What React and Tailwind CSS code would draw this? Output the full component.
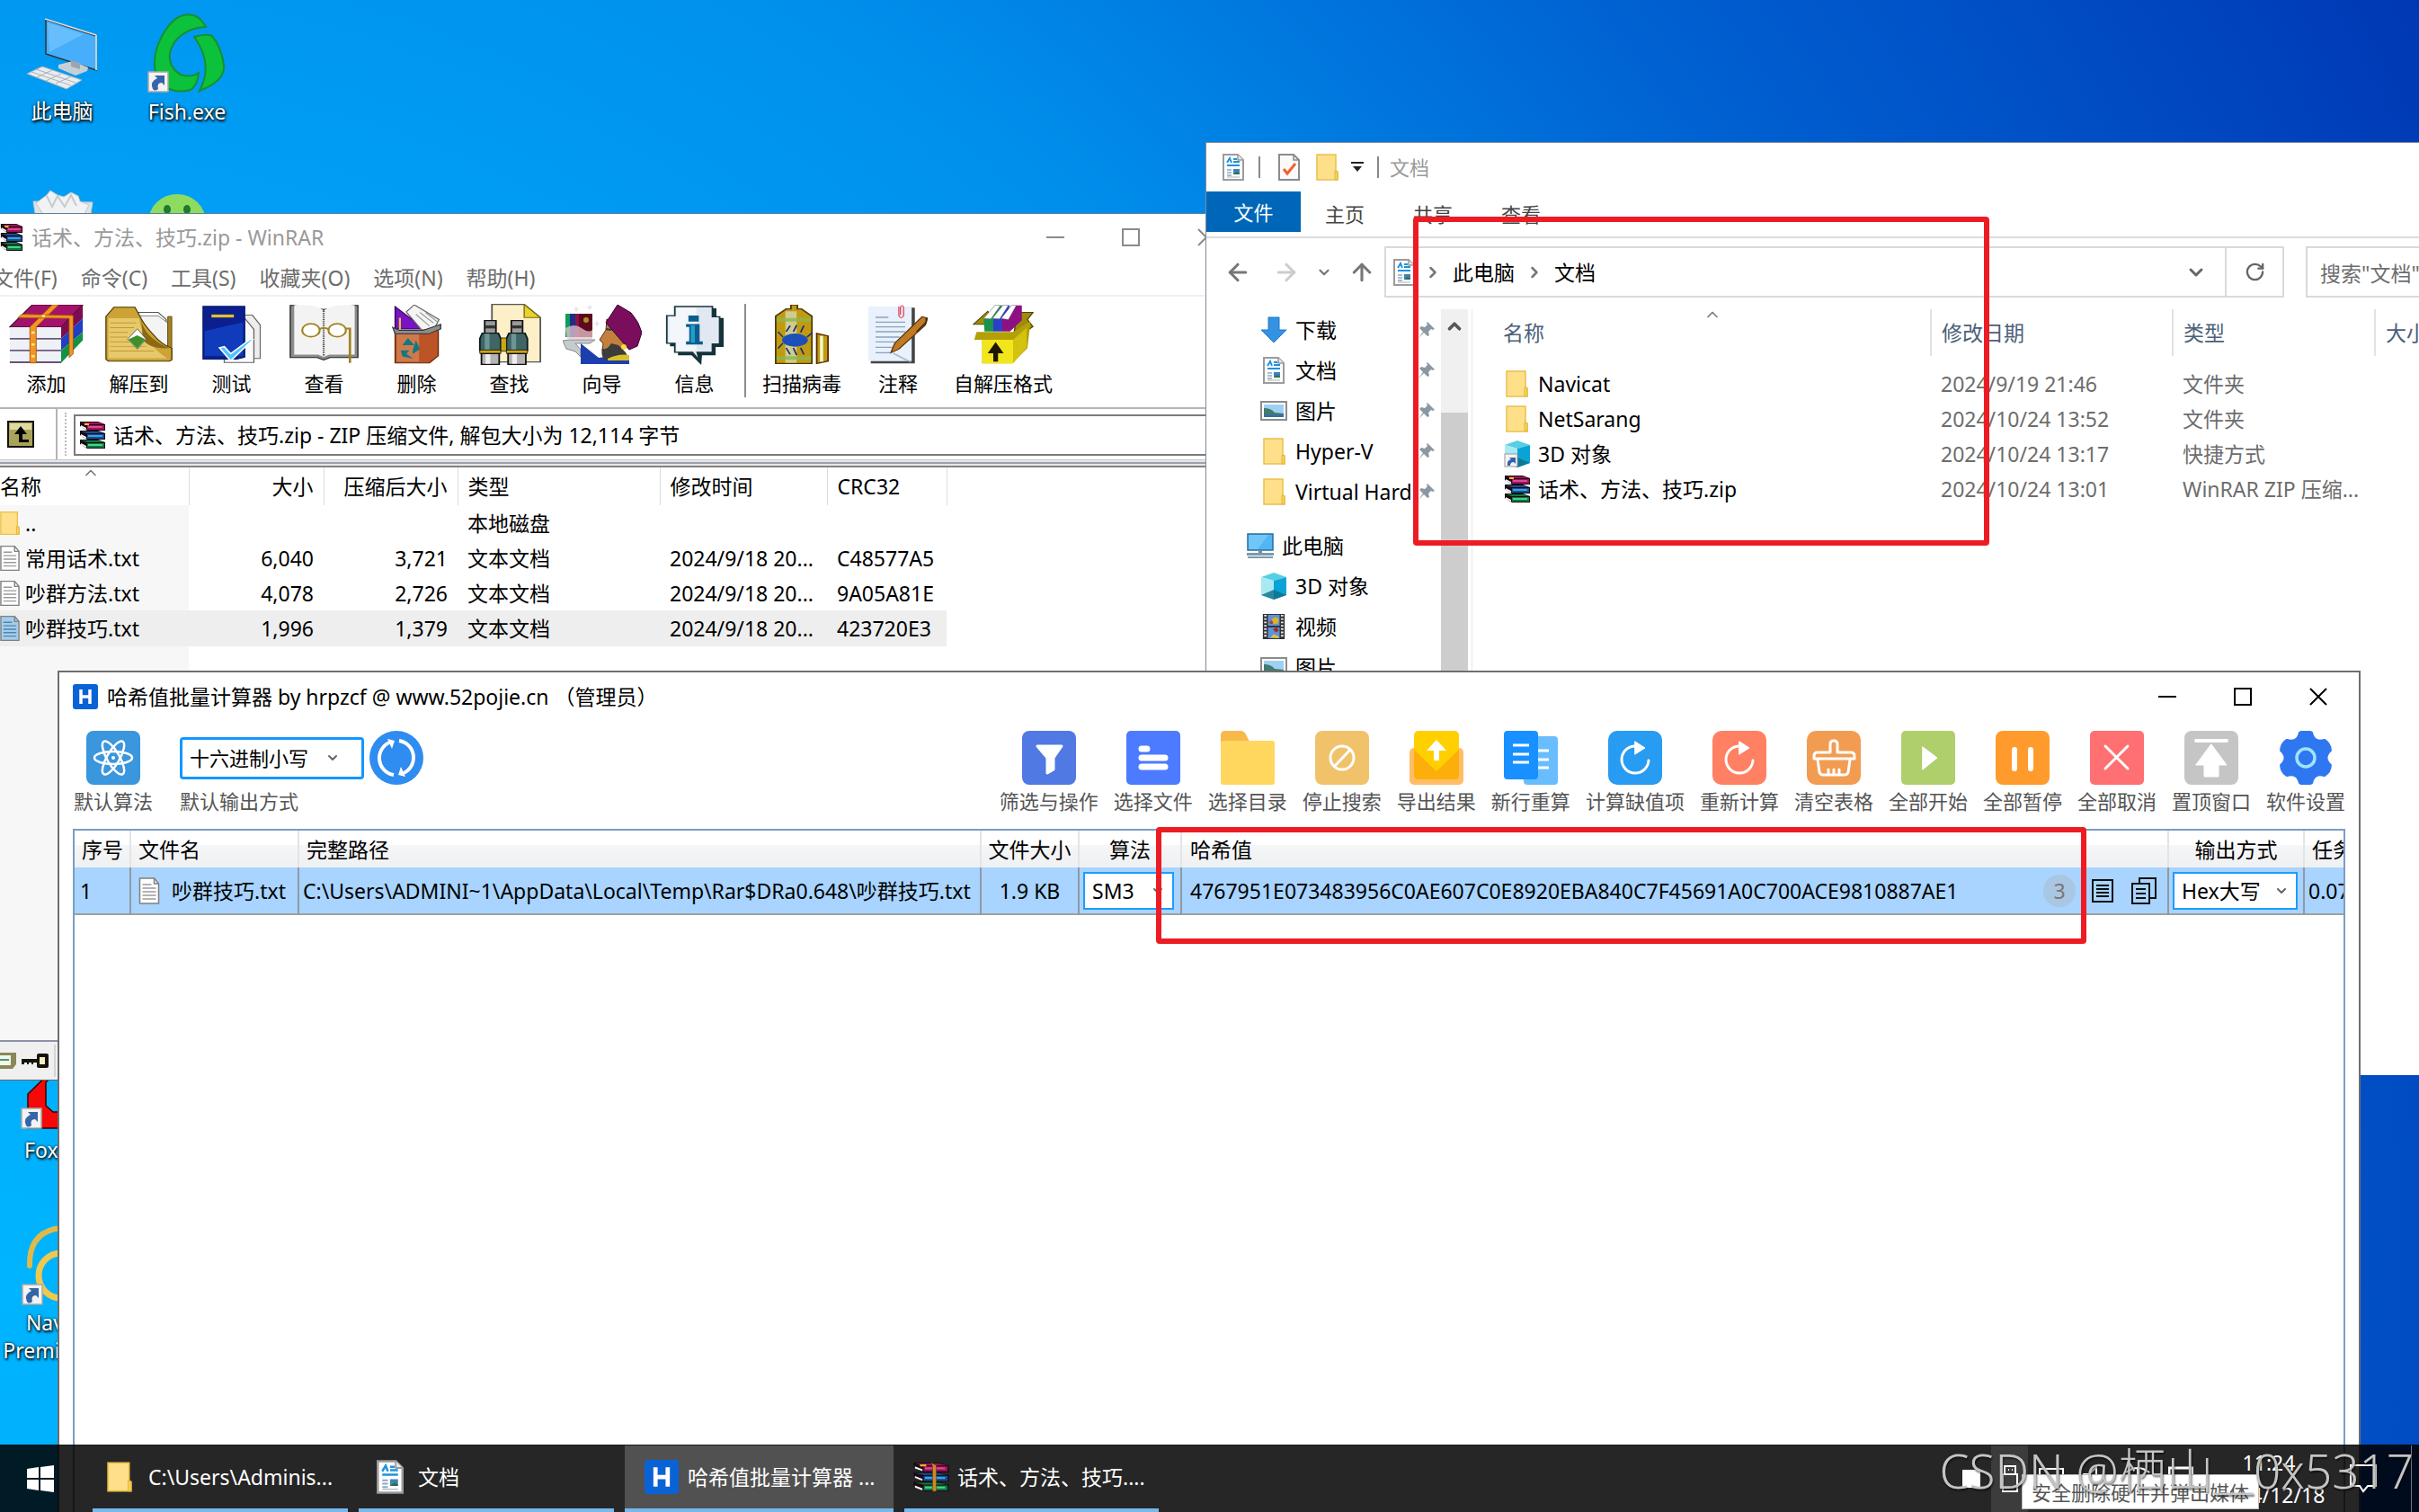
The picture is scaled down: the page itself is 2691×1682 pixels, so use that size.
import React from 'react';
import { ArrowLeft, ArrowRight, ArrowUp, ChevronDown, ChevronRight, ChevronUp, RotateCw } from 'lucide-react';

/* ---------- small shared icons ---------- */

const Folder = ({ className }) => (
  <svg viewBox="0 0 25 30" className={className}>
    <path d="M1 1h21v19h2v9H1z" fill="#ffe08a" stroke="#e9c04a" strokeWidth="1.5" />
    <path d="M21 19q3-1 3 2v8h-3z" fill="#fbd25c" stroke="#e0b43c" />
  </svg>
);

const DocPage = ({ className }) => (
  <svg viewBox="0 0 24 30" className={className}>
    <path d="M1 1h16l6 6v22H1z" fill="#fff" stroke="#9b9b9b" strokeWidth="2" />
    <path d="M17 1v6h6" fill="#e8e8e8" stroke="#9b9b9b" strokeWidth="1.5" />
    <path d="M5 10l3-5 2 5M12 6h4M12 9h7M5 13h14" stroke="#1f93dd" strokeWidth="2" fill="none" />
    <path d="M5 18h5M5 21h5M5 24h5" stroke="#8aa9c2" strokeWidth="1.5" />
    <rect x="12" y="17" width="7" height="6" fill="#3d83b8" />
    <path d="M12 23l4-3 3 2v1z" fill="#2f6d46" />
    <path d="M5 26h14" stroke="#a8b4bd" />
  </svg>
);

const TextPage = ({ className, fill = '#fff', line = '#9a9a9a' }) => (
  <svg viewBox="0 0 23 30" className={className}>
    <path d="M1 1h16l5 6v22H1z" fill={fill} stroke="#808080" strokeWidth="1.5" />
    <path d="M17 1v6h5" fill="none" stroke="#808080" strokeWidth="1.5" />
    <path d="M4 8h10M4 12h15M4 16h15M4 20h15M4 24h15" stroke={line} strokeWidth="1.5" />
  </svg>
);

const CheckPage = ({ className }) => (
  <svg viewBox="0 0 24 30" className={className}>
    <path d="M1 1h16l6 6v22H1z" fill="#fafafa" stroke="#8b8b8b" strokeWidth="2" />
    <path d="M17 1v6h6" fill="none" stroke="#8b8b8b" strokeWidth="1.5" />
    <path d="M6 17l4 5 9-11" fill="none" stroke="#f2622b" strokeWidth="3" />
  </svg>
);

const Picture = ({ className }) => (
  <svg viewBox="0 0 30 22" className={className}>
    <rect x="1" y="1" width="28" height="20" fill="#fff" stroke="#8c8c8c" strokeWidth="2" />
    <rect x="4" y="4" width="22" height="14" fill="#9fd0f3" />
    <path d="M4 8q8 0 12 5l10 1v4H4z" fill="#3f7c6d" />
    <path d="M4 15h22v3H4z" fill="#3a6f9c" />
  </svg>
);

const Cube = ({ className, shortcut }) => (
  <svg viewBox="0 0 30 30" className={className}>
    <path d="M1 5l14-5 14 5-14 4z" fill="#56cfe4" />
    <path d="M1 5l14 4v21L1 25z" fill="#a9e9f2" />
    <path d="M29 5L15 9v21l14-5z" fill="#0aa3d6" />
    <path d="M1 25l14-6 14 6-14 5z" fill="#0c6d87" opacity=".8" />
    {shortcut && (
      <>
        <rect x="1" y="15" width="14" height="14" fill="#f4f4f4" stroke="#9a9a9a" />
        <path d="M4 28q-1-6 4-7l-2-2h7v7l-2-2q-4 0-4 4z" fill="#2f62ae" />
      </>
    )}
  </svg>
);

const Film = ({ className }) => (
  <svg viewBox="0 0 26 30" className={className}>
    <rect width="26" height="30" fill="#2f2f2f" />
    <path d="M3 1v28M23 1v28" stroke="#e8e8e8" strokeWidth="3" strokeDasharray="2 2" />
    <rect x="6" y="1" width="14" height="13" fill="#5f93d6" />
    <rect x="6" y="16" width="14" height="13" fill="#5f93d6" />
    <circle cx="15" cy="8" r="4" fill="#d8b32f" />
    <circle cx="10" cy="10" r="2" fill="#b43a2c" />
    <path d="M12 18l5-2 2 4-4 2z" fill="#a32a23" />
    <path d="M9 28l4-4 6 3v2z" fill="#e0c13c" />
  </svg>
);

const Monitor = ({ className }) => (
  <svg viewBox="0 0 30 30" className={className}>
    <rect x="1" y="2" width="28" height="18" fill="#52b6f4" stroke="#2a6e9e" strokeWidth="1.5" />
    <path d="M2 3h22L12 19H2z" fill="#7fcdfa" opacity=".7" />
    <path d="M13 20h4v3h-4z" fill="#7b8a96" />
    <path d="M0 24h30v1H0zM1 28h28" stroke="#7d99ad" strokeWidth="2" />
  </svg>
);

const Download = ({ className }) => (
  <svg viewBox="0 0 30 30" className={className}>
    <path d="M9 1h12v14h8L15 29 1 15h8z" fill="#3592e3" stroke="#2279c6" />
  </svg>
);

const Pin = ({ className }) => (
  <svg viewBox="0 0 20 20" className={className}>
    <path d="M11 1l8 8-2 1-2-1-3 3 1 4-2 1-4-4-6 6 5-7-4-4 2-2 4 1 3-3-1-2z" fill="#8b98a3" />
  </svg>
);

const Books = ({ className, strap }) => (
  <svg viewBox="0 0 30 30" preserveAspectRatio="none" className={className}>
    {[['#9c1456', '#e0459a', 0], ['#144f96', '#3fa0e0', 10], ['#0d7a41', '#48d18a', 20]].map(([dark, light, y]) => (
      <g key={y}>
        <path d={`M1 ${y}h20l8 3v7H9L1 ${y + 5}z`} fill="#1a0a10" />
        <path d={`M2 ${y + 1}h19l7 2H9z`} fill={dark} />
        <path d={`M9 ${y + 4}h19v5H9z`} fill={dark} />
        <path d={`M10 ${y + 5}h16v2H10z`} fill={light} />
        <path d={`M2 ${y + 4}l6 3v2L2 ${y + 6}z`} fill="#f5f5f5" />
      </g>
    ))}
    <path d="M6 2h5v2H6z" fill="#e6c11e" />
    {strap && <path d="M15 0l4 3v27h-3V4z" fill="#c98a2b" stroke="#5a3a10" strokeWidth=".5" />}
  </svg>
);

const HLogo = ({ className }) => (
  <svg viewBox="0 0 28 28" className={className}>
    <rect width="28" height="28" rx="3" fill="#0a63d6" />
    <path d="M9 6v16M19 6v16M9 14h10" stroke="#fff" strokeWidth="3.5" />
  </svg>
);

const ShortcutArrow = ({ className }) => (
  <svg viewBox="0 0 24 24" className={className}>
    <rect x="1" y="1" width="22" height="22" fill="#f3f3f3" stroke="#a8a8a8" strokeWidth="1.5" />
    <path d="M6 20q-4-8 5-12L8 5h11v11l-3-3q-6 0-4 7-4 3-6 0z" fill="#3465a8" />
  </svg>
);

/* ---------- desktop ---------- */

const desktopLabel = 'text-center text-[23px] leading-[31px] text-white [text-shadow:1px_2px_3px_#000,0_0_3px_#000]';

const ThisPcIcon = () => (
  <svg viewBox="0 0 80 80" className="h-20 w-20">
    <path d="M22 2l56 18v38L22 40z" fill="#46aefb" stroke="#333" strokeWidth="1.5" />
    <path d="M24 5l40 13-38 20z" fill="#7cc8ff" opacity=".6" />
    <path d="M21 1l57 18" stroke="#ddd" strokeWidth="1.5" />
    <path d="M78 19v39" stroke="#ccc" strokeWidth="2" />
    <path d="M36 52l16-4 17 7-1 4-13 5-19-8z" fill="#c7cfd6" />
    <path d="M50 47l10 3v7l-10-3z" fill="#9aa6b0" />
    <path d="M1 62l17-8 44 15-17 10z" fill="#e9ecef" stroke="#a8b0b8" />
    <path d="M6 60l44 15M11 57l44 15M12 66l17-8M22 70l17-8M33 73l17-8" stroke="#a9b1b9" />
  </svg>
);

const FishIcon = () => (
  <svg viewBox="0 0 88 88" className="h-[88px] w-[88px]">
    <path d="M65 15Q56-2 40 2 24 6 12 34 2 62 16 78q12 12 32 7 8-5 9-19-8 6-20 2-14-8-12-24 4-18 24-26 8-3 16-3z" fill="#0cc23a" stroke="#178f2d" strokeWidth="2" />
    <path d="M52 26q14-4 20-1 10 12 13 32 2 18-27 29 16-30-6-60z" fill="#0cc23a" stroke="#178f2d" strokeWidth="2" />
  </svg>
);

const BinIcon = () => (
  <svg viewBox="0 0 70 60" className="h-[60px] w-[70px]">
    <path d="M2 14l66 1-7 45H9z" fill="#dfe3e6" stroke="#bfc8cf" />
    <path d="M5 16l12-9 4-5 8 5 7 2 8-5 8 4 2 6 10 4-6 12H14z" fill="#f1f2f3" stroke="#c2c6ca" />
    <path d="M17 8l6 12 6-12 8 12 7-13 6 12" fill="none" stroke="#c6cbd0" strokeWidth="2" />
  </svg>
);

const WeChatIcon = () => (
  <svg viewBox="0 0 64 60" className="h-[60px] w-16">
    <ellipse cx="32" cy="32" rx="32" ry="31" fill="#8ddc5f" />
    <ellipse cx="21" cy="18" rx="4" ry="5" fill="#1f7a30" />
    <ellipse cx="43" cy="18" rx="4" ry="5" fill="#1f7a30" />
  </svg>
);

const FoxIcon = () => (
  <svg viewBox="0 0 80 80" className="h-20 w-20">
    <path fillRule="evenodd" d="M2 37L38 2h42v73H2zM22 24v26l8 7h50V12H34z" fill="#f40808" stroke="#300" strokeWidth="1.5" />
  </svg>
);

const NavicatIcon = () => (
  <svg viewBox="0 0 90 90" className="h-[90px] w-[90px]" fill="none" strokeLinecap="round">
    <path d="M9 46Q8 12 37 5q8-1 14 6" stroke="#dfba48" strokeWidth="6" />
    <circle cx="44" cy="57" r="25" stroke="#efc84e" strokeWidth="7" />
  </svg>
);

const Desktop = () => (
  <>
    <div className="absolute top-5 left-0 flex w-[138px] flex-col items-center">
      <ThisPcIcon />
      <span className={`mt-2 ${desktopLabel}`}>此电脑</span>
    </div>
    <div className="absolute top-[15px] left-[138px] flex w-[140px] flex-col items-center">
      <div className="relative">
        <FishIcon />
        <ShortcutArrow className="absolute bottom-0 left-0 h-6 w-6" />
      </div>
      <span className={`mt-1.5 ${desktopLabel}`}>Fish.exe</span>
    </div>
    <div className="absolute top-[210px] left-[35px]"><BinIcon /></div>
    <div className="absolute top-[215px] left-[165px]"><WeChatIcon /></div>
    <div className="absolute top-[1180px] left-0 flex w-[138px] flex-col items-center">
      <div className="relative">
        <FoxIcon />
        <ShortcutArrow className="absolute bottom-1 -left-1.5 h-6 w-6" />
      </div>
      <span className={`mt-1 ${desktopLabel}`}>Foxmail</span>
    </div>
    <div className="absolute top-[1362px] left-0 flex w-[138px] flex-col items-center">
      <div className="relative">
        <NavicatIcon />
        <ShortcutArrow className="absolute bottom-0 left-0 h-6 w-6" />
      </div>
      <span className={`mt-1 ${desktopLabel}`}>Navicat Premium 16</span>
    </div>
  </>
);

/* ---------- WinRAR ---------- */

const rarTools = [
  {
    label: '添加',
    width: 'w-[103px]',
    icon: (
      <svg viewBox="20 60 186 200" preserveAspectRatio="none" className="h-[66px] w-[83px]">
        <path d="M22 135L78 60h126l-54 75z" fill="#a3126b" stroke="#3d0626" strokeWidth="3" />
        <path d="M150 135l54-75v46l-54 69z" fill="#7d0d51" />
        <path d="M150 175l54-69v46l-54 62z" fill="#1f3fc4" />
        <path d="M150 214l54-62v28l-54 76z" fill="#139243" />
        <path d="M22 136h128v38H22zM22 176h128v37H22zM22 216h128v38H22z" fill="#eef1f6" />
        <path d="M22 175h128M22 214h128M22 254h128" stroke="#3a1c50" strokeWidth="4" />
        <path d="M72 135l56-75h16L88 135v121H72z" fill="#f39423" stroke="#9c5207" strokeWidth="2" />
        <path d="M42 104l10-12 128 4v130l-10 12V106z" fill="#f39423" stroke="#9c5207" strokeWidth="2" />
        <path d="M76 150h8v8h-8zM76 190h8v8h-8zM76 230h8v8h-8zM102 94h8v8h-8z" fill="#ffe88a" />
      </svg>
    ),
  },
  {
    label: '解压到',
    width: 'w-[103px]',
    icon: (
      <svg viewBox="268 64 168 190" preserveAspectRatio="none" className="h-[62px] w-[75px]">
        <path d="M350 84h50l20 24v90h-70z" fill="#fff" stroke="#555" strokeWidth="3" />
        <path d="M350 96h50l24 24v110h-40z" fill="#f4f4f4" stroke="#666" strokeWidth="2" />
        <path d="M424 98h10v140h-10z" fill="#a9821d" stroke="#4d3905" strokeWidth="2" />
        <path d="M270 98l20-32h52l12 30q10 30 34 64 20 34 46 46v40l-6 4H276l-6-6z" fill="#cda336" stroke="#4d3905" strokeWidth="3" />
        <path d="M276 104h76q4 36 20 70 20 40 50 66H276z" fill="#ecd27b" opacity=".8" />
        <path d="M280 120h66M280 136h60M280 152h44M280 168h44M280 184h50M280 200h90M280 216h110" stroke="#c39a33" strokeWidth="3" />
        <path d="M358 110q8 60 70 96-50 4-66-30z" fill="#8d6a12" />
        <path d="M348 140l22 35-22 34-24-34z" fill="#fff" stroke="#445" strokeWidth="2" />
        <path d="M326 176l22-14 20 14-20 31z" fill="#3f8f2a" />
      </svg>
    ),
  },
  {
    label: '测试',
    width: 'w-[103px]',
    icon: (
      <svg viewBox="505 64 146 194" preserveAspectRatio="none" className="h-[64px] w-[65px]">
        <path d="M590 96h40l20 34v112h-60z" fill="#ededed" stroke="#666" strokeWidth="3" />
        <path d="M560 108h52l22 36v112h-74z" fill="#fafafa" stroke="#666" strokeWidth="3" />
        <path d="M507 66h104v172l-20 6h-84z" fill="#0b1f8f" stroke="#081a66" strokeWidth="3" />
        <path d="M511 150l96-30v114h-96z" fill="#1450d8" opacity=".6" />
        <path d="M528 94h56v10h-56z" fill="#e3c12e" />
        <path d="M548 206l28 44 56-72-6-2-50 50-16-24z" fill="#4ec5ff" stroke="#fff" strokeWidth="4" />
      </svg>
    ),
  },
  {
    label: '查看',
    width: 'w-[103px]',
    icon: (
      <svg viewBox="724 64 174 200" preserveAspectRatio="none" className="h-[66px] w-[77px]">
        <path d="M726 66h6l78 14 80-14h6v176h-70l-16 8-16-8h-68z" fill="#8c8c8c" stroke="#222" strokeWidth="3" />
        <path d="M736 66q60-6 74 20 14-26 78-20v166h-64l-14 8-14-8h-60z" fill="#f3f3f3" />
        <path d="M810 84v154" stroke="#555" strokeWidth="5" strokeDasharray="4 3" />
        <circle cx="778" cy="150" r="22" fill="#fff" stroke="#a08320" strokeWidth="5" />
        <circle cx="844" cy="150" r="22" fill="#fff" stroke="#a08320" strokeWidth="5" />
        <path d="M800 146q10-8 22 0M866 144h10v116" fill="none" stroke="#a08320" strokeWidth="6" />
      </svg>
    ),
  },
  {
    label: '删除',
    width: 'w-[103px]',
    icon: (
      <svg viewBox="976 60 126 200" preserveAspectRatio="none" className="h-[66px] w-[56px]">
        <path d="M984 66l74 76h-74z" fill="#7812c4" stroke="#2b0550" strokeWidth="3" />
        <path d="M1012 84l20-24 62 50-14 36-30-2z" fill="#f4f4f4" stroke="#666" strokeWidth="3" />
        <path d="M1036 92l34 40M1046 86l34 36M1060 86l30 32" stroke="#999" strokeWidth="3" />
        <path d="M996 104v40" stroke="#e3c12e" strokeWidth="5" />
        <path d="M984 156l108-14v90l-22 24h-86z" fill="#bd5425" stroke="#642408" strokeWidth="3" />
        <path d="M988 160h56v92h-56z" fill="#d98a5d" opacity=".7" />
        <path d="M978 136l16 10h60l44-20v16l-30 16h-84z" fill="#8d8d8d" stroke="#333" strokeWidth="3" />
        <path d="M1002 196l14-24 16 24zM1036 180l10 30-18 16 0-12zM998 214h22l-8 12 18 16-28-8z" fill="#0e7a80" />
      </svg>
    ),
  },
  {
    label: '查找',
    width: 'w-[103px]',
    icon: (
      <svg viewBox="1172 60 156 204" preserveAspectRatio="none" className="h-[68px] w-[70px]">
        <path d="M1206 62h80l40 44v148h-120z" fill="#fdf0c8" stroke="#555" strokeWidth="4" />
        <path d="M1286 62v44h40z" fill="#ead22c" stroke="#776b11" strokeWidth="3" />
        {[1176, 1242].map((x) => (
          <g key={x} transform={`translate(${x} 116)`}>
            <path d="M12 0h28v42H12z" fill="#9a9a9a" stroke="#111" strokeWidth="4" />
            <path d="M14 16h24v10H14z" fill="#333" />
            <path d="M6 42h40l6 18v40H0V60z" fill="#3f6566" stroke="#0c1717" strokeWidth="4" />
            <path d="M12 44h12v54H12z" fill="#6c9596" />
            <path d="M0 98h52v12H0z" fill="#c9a718" stroke="#111" strokeWidth="2" />
            <path d="M4 110h44v36H4z" fill="#b4b4b4" stroke="#111" strokeWidth="4" />
            <path d="M14 112h12v32H14z" fill="#eee" />
          </g>
        ))}
        <path d="M1228 174h14v44h-14z" fill="#c9a718" stroke="#111" strokeWidth="2" />
      </svg>
    ),
  },
  {
    label: '向导',
    width: 'w-[103px]',
    icon: (
      <svg viewBox="0 0 88 66" className="h-[66px] w-[88px]">
        <path d="M3 10h5v26H3z" fill="#149a59" />
        <path d="M8 10h6v26H8z" fill="#1b2f86" />
        <path d="M14 10h4v26h-4z" fill="#8d0f4c" />
        <path d="M18 10h15v26H18z" fill="#5e0a1e" />
        <circle cx="26" cy="17" r="3" fill="#a8951e" />
        <path d="M3 26q10-6 18 0 8 6 12 2v10H5z" fill="#e7c7cf" opacity=".75" />
        <path d="M0 40l8-1h28l-6 4H14l6 7v8l-6-6-10-3z" fill="#c6cbd0" stroke="#888" />
        <path d="M20 43l20 16 22-3 12 2v8H20z" fill="#1b3fae" />
        <path d="M49 16l-1 12-7 11 4 4-1 8q6 6 14 4l16-10V28z" fill="#c27f3e" stroke="#5b3512" />
        <path d="M48 20L61 0l15 9q9 10 12 22l-5 15-9 4z" fill="#7a0d5c" stroke="#3a052b" />
        <path d="M44 48q4 4 10-5l8 2 8 8 3 6-10 4-17-2q-4-6-2-13z" fill="#3c3c3c" />
        <path d="M50 60q12-6 24-4v6H50z" fill="#d9bf2a" />
        <circle cx="68" cy="47" r="3" fill="#f4de37" />
        <path d="M48 27l6 1" stroke="#17424f" strokeWidth="2" />
        <path d="M15 2v6M12 5h6M30 0v6M27 3h6M38 18v6M35 21h6" stroke="#d6dbe4" />
      </svg>
    ),
  },
  {
    label: '信息',
    width: 'w-[103px]',
    icon: (
      <svg viewBox="178 62 146 200" preserveAspectRatio="none" className="h-[67px] w-[65px]">
        <path d="M208 74h98v32h18v96h-20v28h-34l-2 32-24-32h-34v-30h-20v-94h18z" fill="#14323a" />
        <path d="M202 68h94v34h18v90h-18v28h-38l6 28-18-28h-44v-30h-20V98h20z" fill="#e2e8f2" stroke="#17353d" strokeWidth="4" />
        <path d="M206 72h50v144h-50v-30h-18v-84h18z" fill="#fff" opacity=".6" />
        <path d="M236 98h26v20h-26zM230 126h34v58h8v10h-42v-10h8v-48h-8z" fill="#0c5d8e" />
        <path d="M242 130h10v58h-10z" fill="#1fa0c8" />
      </svg>
    ),
  },
];

const rarTools2 = [
  {
    label: '扫描病毒',
    width: 'w-[124px]',
    icon: (
      <svg viewBox="458 60 134 198" preserveAspectRatio="none" className="h-[66px] w-[60px]">
        <path d="M498 60h16v14h10l26 24v158h-90V98l26-24h12z" fill="#c29a12" stroke="#4b3b05" strokeWidth="4" />
        <path d="M484 82h28v172h-28z" fill="#d8efe6" opacity=".6" />
        <path d="M462 104h86v12h-86zM462 232h86v12h-86z" fill="#8bb84c" opacity=".8" />
        <ellipse cx="508" cy="178" rx="32" ry="22" fill="#1c50b8" />
        <path d="M486 150l10-20M504 150l8-22M522 152l8-22M486 204l10 22M504 204l8 24M522 204l8 22M478 168l-12-18M478 188l-12 18M538 168l12-14" stroke="#173173" strokeWidth="4" />
        <path d="M562 156l28 8v84l-28 8z" fill="#c29a12" stroke="#5a2c05" strokeWidth="4" />
        <path d="M570 164h8v86h-8z" fill="#eef7c8" />
      </svg>
    ),
  },
  {
    label: '注释',
    width: 'w-[90px]',
    icon: (
      <svg viewBox="702 60 148 198" preserveAspectRatio="none" className="h-[66px] w-[66px]">
        <path d="M710 70h108v186H708z" fill="#444" />
        <path d="M702 66h108v182H702z" fill="#e9f1fc" />
        <path d="M720 102h32M720 118h74M720 134h74M720 150h74M720 168h60M720 184h50M720 202h42M720 220h36" stroke="#8aa2bd" strokeWidth="4" />
        <path d="M778 66v30q6 16 12 0V68q-4-10-8 0v26" fill="none" stroke="#e04a62" strokeWidth="3" />
        <path d="M758 220l10-32 68-88 14 4-6 24-66 80z" fill="#c07a24" stroke="#54300a" strokeWidth="3" />
        <path d="M822 150l24-32v-14" stroke="#222" strokeWidth="3" fill="none" />
        <path d="M764 222l44 30" stroke="#88a0ac" strokeWidth="5" opacity=".6" />
      </svg>
    ),
  },
  {
    label: '自解压格式',
    width: 'w-[144px]',
    icon: (
      <svg viewBox="948 58 154 200" preserveAspectRatio="none" className="h-[66px] w-[68px]">
        <path d="M950 124l36-44 24 44zM1060 84h40l-14 24 14 24-50 44z" fill="#a18c08" stroke="#4f4404" strokeWidth="3" />
        <path d="M976 106l28-46h18l-22 88h-22z" fill="#19934c" />
        <path d="M1000 106l22-46h20l-20 88h-22z" fill="#2b3fc9" />
        <path d="M1022 106l24-46h26v50l-30 38h-20z" fill="#8d1182" />
        <path d="M976 104l28-44h14l-24 46zM998 104l26-44h14l-22 46zM1020 104l26-44h12l-20 48z" fill="#fff" stroke="#555" />
        <path d="M958 150h92l44-36-8 90-38 52h-76v-80h-20z" fill="#b3a008" />
        <path d="M972 176h78v80h-78z" fill="#f2e51c" />
        <path d="M1050 176l34-40v66l-34 54z" fill="#d3c310" />
        <path d="M1006 184l20 38h-14v28h-12v-28h-14z" fill="#1d1702" />
      </svg>
    ),
  },
];

const rarRows = [
  ['..', '', '', '本地磁盘', '', ''],
  ['常用话术.txt', '6,040', '3,721', '文本文档', '2024/9/18 20...', 'C48577A5'],
  ['吵群方法.txt', '4,078', '2,726', '文本文档', '2024/9/18 20...', '9A05A81E'],
  ['吵群技巧.txt', '1,996', '1,379', '文本文档', '2024/9/18 20...', '423720E3'],
];

const RarTool = ({ tool }) => (
  <button className={`flex flex-col items-center gap-1 ${tool.width}`}>
    <span className="flex h-[68px] items-center">{tool.icon}</span>
    <span className="text-[22px] whitespace-nowrap">{tool.label}</span>
  </button>
);

const WinRar = () => (
  <section className="absolute top-[237px] left-0 flex h-[965px] w-[1360px] flex-col border-t border-[#5c7f9c] bg-white text-[23px] leading-8 text-black">
    <header className="flex h-[52px] shrink-0 items-center text-[#999]">
      <Books className="mr-[9px] h-[30px] w-[26px]" />
      <span>话术、方法、技巧.zip - WinRAR</span>
      <div className="mr-2 ml-auto flex items-center gap-16">
        <button aria-label="最小化" className="h-0.5 w-5 bg-[#8a8a8a]" />
        <button aria-label="最大化" className="h-5 w-5 border-2 border-[#8a8a8a]" />
        <button aria-label="关闭">
          <svg viewBox="0 0 20 20" className="h-5 w-5"><path d="M1 1l18 18M19 1L1 19" stroke="#8a8a8a" strokeWidth="2" /></svg>
        </button>
      </div>
    </header>
    <nav className="-ml-2 flex h-10 shrink-0 items-center gap-[26px] border-b-2 border-[#f0f0f0] text-[#6d6d6d]">
      {['文件(F)', '命令(C)', '工具(S)', '收藏夹(O)', '选项(N)', '帮助(H)'].map((m) => (
        <button key={m} className="whitespace-nowrap">{m}</button>
      ))}
    </nav>
    <div className="flex h-[125px] shrink-0 items-start border-b-2 border-[#b4b4b4] pt-2">
      {rarTools.map((t) => <RarTool key={t.label} tool={t} />)}
      <div className="ml-1 h-[104px] w-0.5 bg-[#8c8c8c]" />
      {rarTools2.map((t) => <RarTool key={t.label} tool={t} />)}
    </div>
    <div className="flex h-[57px] shrink-0 items-stretch border-b border-[#c8c8c8]">
      <button aria-label="上一级" className="ml-2 flex w-14 items-center border-r-2 border-[#b4b4b4]">
        <svg viewBox="0 0 30 30" className="h-[30px] w-[30px]">
          <rect x="1" y="1" width="28" height="28" fill="#a9a35a" stroke="#111" strokeWidth="2" />
          <path d="M3 3h24v7H3z" fill="#dedaa2" />
          <path d="M15 6l7 9h-5v6h7v3H13v-9H8z" fill="#000" />
        </svg>
      </button>
      <div className="mx-2 my-1 border-l-2 border-dotted border-[#bbb]" />
      <div className="mt-1.5 mb-1 flex flex-1 items-center border-2 border-[#7b7b7b] pl-1">
        <Books className="mr-2 h-[30px] w-[30px]" />
        <span className="whitespace-nowrap">话术、方法、技巧.zip - ZIP 压缩文件, 解包大小为 12,114 字节</span>
      </div>
    </div>
    <div className="h-2 shrink-0 border-b-2 border-[#828282] bg-[#e6e6e8]">
      <div className="h-1 border-b-2 border-[#9aa0ac]" />
    </div>
    <div className="relative flex-1 bg-[linear-gradient(to_right,#f7f7f7_210px,#fff_210px)]">
      <table className="w-[1053px] table-fixed border-collapse whitespace-nowrap">
        <colgroup>
          <col className="w-[210px]" /><col className="w-[150px]" /><col className="w-[149px]" />
          <col className="w-[225px]" /><col className="w-[186px]" /><col className="w-[133px]" />
        </colgroup>
        <thead>
          <tr className="h-[42px] bg-white text-left">
            <th className="relative border-r border-[#ddd] font-normal">
              名称
              <ChevronUp className="absolute -top-1 left-[91px] h-5 w-5 text-[#777]" strokeWidth={2} />
            </th>
            <th className="border-r border-[#ddd] pr-[11px] text-right font-normal">大小</th>
            <th className="border-r border-[#ddd] pr-[11px] text-right font-normal">压缩后大小</th>
            <th className="border-r border-[#ddd] pl-[11px] font-normal">类型</th>
            <th className="border-r border-[#ddd] pl-[11px] font-normal">修改时间</th>
            <th className="border-r border-[#ddd] pl-[11px] font-normal">CRC32</th>
          </tr>
        </thead>
        <tbody>
          {rarRows.map(([name, size, packed, type, time, crc], i) => (
            <tr key={name} className={i === 3 ? 'h-10 bg-[#eee]' : 'h-[39px]'}>
              <td>
                <span className="flex items-center gap-1.5">
                  {i === 0
                    ? <Folder className="h-[30px] w-[22px]" />
                    : <TextPage className="h-[30px] w-[22px]" fill={i === 3 ? '#a5cdeb' : '#fff'} line={i === 3 ? '#4f86ae' : '#9a9a9a'} />}
                  {name}
                </span>
              </td>
              <td className="pr-[11px] text-right">{size}</td>
              <td className="pr-[11px] text-right">{packed}</td>
              <td className="pl-[11px]">{type}</td>
              <td className="pl-[11px]">{time}</td>
              <td className="pl-[11px]">{crc}</td>
            </tr>
          ))}
        </tbody>
      </table>
    </div>
    <footer className="flex h-[45px] shrink-0 items-center gap-1.5 border-t-2 border-b border-t-[#8d93a5] border-b-[#666] bg-[#f0f0f0]">
      <svg viewBox="0 0 18 20" className="h-5 w-[18px]">
        <path d="M0 1h18v13l-4 5H0z" fill="#8a8857" /><path d="M0 4h12v11H0z" fill="#f5f5e8" /><path d="M0 9h10" stroke="#3b9a86" strokeWidth="2" />
      </svg>
      <svg viewBox="0 0 30 16" className="h-4 w-[30px]">
        <path d="M0 6h17V2q0-2 2-2h9q2 0 2 2v12q0 2-2 2h-9q-2 0-2-2v-4h-4v2h-2v-2H8v2H6v-2H3v2H0z" fill="#16140a" />
        <rect x="20" y="4" width="6" height="8" fill="#f5f0c0" />
      </svg>
      <div className="h-9 w-0.5 bg-[#d5d5d5]" />
    </footer>
  </section>
);

/* ---------- file explorer ---------- */

const quickAccess = [
  { label: '下载', icon: <Download className="h-[30px] w-[30px]" />, pin: true },
  { label: '文档', icon: <DocPage className="h-[30px] w-6" />, pin: true },
  { label: '图片', icon: <Picture className="h-[22px] w-[30px]" />, pin: true },
  { label: 'Hyper-V', icon: <Folder className="h-[30px] w-[25px]" />, pin: true },
  { label: 'Virtual Hard', icon: <Folder className="h-[30px] w-[25px]" />, pin: true },
];

const thisPc = [
  { label: '3D 对象', icon: <Cube className="h-[30px] w-[30px]" /> },
  { label: '视频', icon: <Film className="h-7 w-[26px]" /> },
  { label: '图片', icon: <Picture className="h-[22px] w-[30px]" /> },
];

const files = [
  { name: 'Navicat', date: '2024/9/19 21:46', type: '文件夹', icon: <Folder className="h-[30px] w-[25px]" /> },
  { name: 'NetSarang', date: '2024/10/24 13:52', type: '文件夹', icon: <Folder className="h-[30px] w-[25px]" /> },
  { name: '3D 对象', date: '2024/10/24 13:17', type: '快捷方式', icon: <Cube className="h-[30px] w-[30px]" shortcut /> },
  { name: '话术、方法、技巧.zip', date: '2024/10/24 13:01', type: 'WinRAR ZIP 压缩...', icon: <Books className="h-[30px] w-[30px]" /> },
];

const SideItem = ({ item }) => (
  <li className="flex h-[45px] items-center pl-[60px]">
    <span className="flex w-[30px] justify-center">{item.icon}</span>
    <a href="#" className="ml-[9px] flex-1 whitespace-nowrap text-black">{item.label}</a>
    {item.pin && <Pin className="mr-[6px] h-5 w-5 shrink-0" />}
  </li>
);

const Explorer = () => (
  <section className="absolute top-[158px] right-0 left-[1341px] flex h-[1038px] flex-col overflow-hidden border-t border-l border-[#7f8c99] bg-white text-[23px] leading-8">
    <header className="flex h-[54px] shrink-0 items-center pl-[18px] text-[22px] text-[#999]">
      <DocPage className="h-[30px] w-6" />
      <div className="ml-4 h-6 w-0.5 bg-[#888]" />
      <CheckPage className="ml-5 h-[30px] w-6" />
      <Folder className="ml-[18px] h-[30px] w-[25px]" />
      <svg viewBox="0 0 14 12" className="ml-[14px] h-3 w-[14px]"><path d="M0 0h14v2H0zM2 5h10l-5 6z" fill="#222" /></svg>
      <div className="ml-[15px] h-6 w-0.5 bg-[#888]" />
      <span className="ml-3">文档</span>
    </header>
    <nav className="flex h-[52px] shrink-0 items-start border-b-2 border-[#dcdcdc] text-[22px] text-[#444]">
      <button className="h-[45px] w-[105px] bg-[#0067b8] text-white">文件</button>
      <button className="h-[50px] w-[98px]">主页</button>
      <button className="h-[50px] w-[98px]">共享</button>
      <button className="h-[50px] w-[98px]">查看</button>
    </nav>
    <div className="flex h-[79px] shrink-0 items-start pt-[9px]">
      <div className="flex h-[57px] w-[198px] shrink-0 items-center gap-[18px] pl-5 text-[#777]">
        <button aria-label="后退"><ArrowLeft size={30} strokeWidth={2.5} /></button>
        <button aria-label="前进" className="ml-1.5 text-[#ccc]"><ArrowRight size={30} strokeWidth={2.5} /></button>
        <button aria-label="最近"><ChevronDown size={18} strokeWidth={3} /></button>
        <button aria-label="向上"><ArrowUp size={30} strokeWidth={2.5} /></button>
      </div>
      <div className="flex h-[57px] flex-1 items-center border-2 border-[#d9d9d9] pl-2 text-black">
        <DocPage className="h-[30px] w-6" />
        <ChevronRight className="ml-[10px] text-[#777]" size={20} strokeWidth={3} />
        <a href="#" className="ml-3">此电脑</a>
        <ChevronRight className="mx-3 text-[#777]" size={20} strokeWidth={3} />
        <a href="#">文档</a>
        <ChevronDown className="mr-5 ml-auto text-[#666]" size={24} strokeWidth={3} />
        <button aria-label="刷新" className="flex h-full w-16 items-center justify-center border-l-2 border-[#d9d9d9] text-[#666]">
          <RotateCw size={23} strokeWidth={2.5} />
        </button>
      </div>
      <input aria-label="搜索" defaultValue={'搜索"文档"'} className="ml-6 h-[57px] w-[126px] border-2 border-r-0 border-[#d9d9d9] pl-[14px] text-[#6d6d6d]" />
    </div>
    <div className="flex min-h-0 flex-1">
      <aside className="w-[261px] shrink-0 overflow-hidden">
        <ul>
          {quickAccess.map((q) => <SideItem key={q.label} item={q} />)}
          <li className="mt-[15px] flex h-[45px] items-center pl-[45px]">
            <Monitor className="h-[30px] w-[30px]" />
            <a href="#" className="ml-[9px] text-black">此电脑</a>
          </li>
          {thisPc.map((q) => <SideItem key={q.label} item={q} />)}
        </ul>
      </aside>
      <div className="w-[30px] shrink-0 bg-[#f0f0f0]">
        <div className="flex h-[115px] justify-center pt-2 text-[#555]"><ChevronUp size={22} strokeWidth={4} /></div>
        <div className="h-[735px] bg-[#cdcdcd]" />
      </div>
      <div className="ml-1 flex-1 border-l border-[#e8e8e8]">
        <table className="w-full table-fixed border-collapse whitespace-nowrap">
          <colgroup>
            <col /><col className="w-[269px]" /><col className="w-[225px]" /><col className="w-[49px]" />
          </colgroup>
          <thead>
            <tr className="h-[52px] text-left text-[#4c607a]">
              <th className="relative pl-[34px] font-normal">
                名称
                <ChevronUp className="absolute -top-1 left-[257px] text-[#777]" size={20} />
              </th>
              <th className="border-l-2 border-[#e2e2e2] pl-[11px] font-normal">修改日期</th>
              <th className="border-l-2 border-[#e2e2e2] pl-[11px] font-normal">类型</th>
              <th className="overflow-hidden border-l-2 border-[#e2e2e2] pl-[11px] font-normal">大小</th>
            </tr>
            <tr className="h-[11px]" />
          </thead>
          <tbody className="text-[#6d6d6d]">
            {files.map((f) => (
              <tr key={f.name} className="h-[39px]">
                <td className="pl-[34px]">
                  <span className="flex items-center gap-2 text-black">
                    <span className="flex w-[31px] justify-center">{f.icon}</span>
                    {f.name}
                  </span>
                </td>
                <td className="pl-[11px]">{f.date}</td>
                <td className="pl-[11px]">{f.type}</td>
                <td />
              </tr>
            ))}
          </tbody>
        </table>
      </div>
    </div>
  </section>
);

/* ---------- hash calculator ---------- */

const Tile = ({ fill, rx = 8, children }) => (
  <svg viewBox="0 0 60 60" className="h-[60px] w-[60px]" fill="none" stroke="#fff" strokeWidth="3" strokeLinecap="round" strokeLinejoin="round">
    <rect width="60" height="60" rx={rx} fill={fill} stroke="none" />
    {children}
  </svg>
);

const Redo = () => (
  <>
    <path d="M29 17A15 15 0 1 0 45 33" />
    <path d="M30 12l11 7-11 7z" fill="#fff" strokeWidth="1" />
  </>
);

// six teeth round the centre with concave flanks
const gearPath = () => {
  const at = (deg, r) => {
    const a = (deg * Math.PI) / 180;
    return `${(30 + r * Math.cos(a)).toFixed(1)} ${(30 + r * Math.sin(a)).toFixed(1)}`;
  };
  let d = `M${at(-104, 29)}`;
  for (let k = 0; k < 6; k += 1) {
    const c = -90 + k * 60;
    d += `Q${at(c, 32)} ${at(c + 14, 29)}Q${at(c + 30, 19)} ${at(c + 46, 29)}`;
  }
  return `${d}z`;
};

const hashTools = [
  { label: '筛选与操作', icon: <Tile fill="#5079e3"><path d="M17 17h27l-9 13v13l-7 4V30z" fill="#fff" /></Tile> },
  { label: '选择文件', icon: <Tile fill="#4d7bff" rx={5}><path d="M17 20h6M17 30h26M17 40h26" strokeWidth="7" /></Tile> },
  {
    label: '选择目录',
    icon: (
      <svg viewBox="0 0 60 60" className="h-[60px] w-[60px]">
        <path d="M0 16V5q0-5 5-5h17q4 0 6 4l6 12z" fill="#f8b84a" />
        <rect y="11" width="60" height="49" rx="3" fill="#ffd75e" />
      </svg>
    ),
  },
  { label: '停止搜索', icon: <Tile fill="#f0c36a"><circle cx="30" cy="30" r="13" /><path d="M22 39l17-18" /></Tile> },
  {
    label: '导出结果',
    icon: (
      <svg viewBox="0 0 60 60" className="h-[60px] w-[60px]">
        <rect y="19" width="60" height="41" rx="5" fill="#ffbd66" />
        <rect x="5" width="50" height="54" rx="5" fill="#ffcf00" />
        <path d="M5 21l25 24 25-24v28q0 5-5 5H10q-5 0-5-5z" fill="#fcaf0a" />
        <path d="M30 10l11 12h-8v11h-6V22h-8z" fill="#fff" />
      </svg>
    ),
  },
  {
    label: '新行重算',
    icon: (
      <svg viewBox="0 0 60 60" className="h-[60px] w-[60px]" stroke="#fff" strokeWidth="3">
        <rect x="22" y="6" width="38" height="54" rx="4" fill="#69bdff" stroke="none" />
        <path d="M38 22h12M38 32h12M38 41h12" />
        <rect width="38" height="54" rx="4" fill="#1890ff" stroke="none" />
        <path d="M10 16h18M10 26h18M10 35h18" />
      </svg>
    ),
  },
  { label: '计算缺值项', icon: <Tile fill="#289bf2" rx={10}><Redo /></Tile> },
  { label: '重新计算', icon: <Tile fill="#ff8063" rx={10}><Redo /></Tile> },
  {
    label: '清空表格',
    icon: (
      <Tile fill="#f29c52" rx={10}>
        <path d="M26 24V15q0-4 4-4t4 4v9h15q4 0 4 4v3H8v-3q0-4 4-4zM12 32l2 14q1 3 4 3h24q3 0 4-3l2-14M24 48v-5M30 48v-5M36 48v-5" />
      </Tile>
    ),
  },
  { label: '全部开始', icon: <Tile fill="#aecf6c" rx={5}><path d="M24 18l16 12-16 13z" fill="#fff" strokeWidth="1" /></Tile> },
  { label: '全部暂停', icon: <Tile fill="#ff9b2c"><path d="M21 21v21M39 21v21" strokeWidth="6" /></Tile> },
  { label: '全部取消', icon: <Tile fill="#ff7072" rx={5}><path d="M17 17l25 25M42 17L17 42" /></Tile> },
  { label: '置顶窗口', icon: <Tile fill="#c5c5c5"><path d="M13 11h34" strokeWidth="4" /><path d="M30 15l17 23h-9v13H22V38h-9z" fill="#fff" strokeWidth="1" /></Tile> },
  {
    label: '软件设置',
    icon: (
      <svg viewBox="0 0 60 60" className="h-[60px] w-[60px]">
        <path d={gearPath()} fill="#2f77f1" stroke="#2f77f1" strokeWidth="2" strokeLinejoin="round" />
        <circle cx="30" cy="30" r="10" fill="none" stroke="#9fe4ff" strokeWidth="3.5" />
      </svg>
    ),
  },
];

const Picker = ({ label, value, className, chevron }) => (
  <span className={`relative flex bg-white ${className}`}>
    <select aria-label={label} className="h-full w-full appearance-none bg-transparent pl-2 outline-none">
      <option>{value}</option>
    </select>
    <ChevronDown className={`pointer-events-none absolute top-1/2 -mt-2 text-[#666] ${chevron}`} size={16} strokeWidth={3} />
  </span>
);

const HashCalculator = () => (
  <section className="absolute top-[746px] right-[65px] bottom-0 left-16 flex flex-col overflow-hidden border-2 border-b-0 border-[#6e6e6e] bg-white px-[15px] text-[23px] leading-8 text-black">
    <header className="flex h-[53px] shrink-0 items-center">
      <HLogo className="mr-[10px] h-7 w-7" />
      <h1>哈希值批量计算器 by hrpzcf @ www.52pojie.cn （管理员）</h1>
      <div className="mr-5 ml-auto flex items-center gap-16">
        <button aria-label="最小化" className="h-0.5 w-5 bg-black" />
        <button aria-label="最大化" className="h-5 w-5 border-2 border-black" />
        <button aria-label="关闭">
          <svg viewBox="0 0 20 20" className="h-5 w-5"><path d="M1 1l18 18M19 1L1 19" stroke="#000" strokeWidth="2" /></svg>
        </button>
      </div>
    </header>
    <div className="flex shrink-0 items-start pt-3 text-[22px] text-[#555]">
      <button className="flex w-[90px] flex-col items-center gap-0.5">
        <svg viewBox="0 0 60 60" className="h-[60px] w-[60px]" fill="none" stroke="#fff" strokeWidth="2.5">
          <rect width="60" height="60" rx="8" fill="#3a96dd" stroke="none" />
          <ellipse cx="30" cy="30" rx="21" ry="7" />
          <ellipse cx="30" cy="30" rx="21" ry="7" transform="rotate(60 30 30)" />
          <ellipse cx="30" cy="30" rx="21" ry="7" transform="rotate(120 30 30)" />
          <circle cx="30" cy="30" r="2" fill="#fff" stroke="none" />
        </svg>
        <span>默认算法</span>
      </button>
      <div className="ml-[29px] flex flex-col gap-0.5">
        <div className="flex h-[60px] items-center gap-1.5">
          <Picker label="默认输出方式" value="十六进制小写" className="h-[47px] w-[205px] rounded border-[3px] border-[#1495ff] text-black" chevron="right-6" />
          <button aria-label="切换">
            <svg viewBox="0 0 60 60" className="h-[60px] w-[60px]" fill="none" stroke="#fff" strokeWidth="4">
              <circle cx="30" cy="30" r="30" fill="#2f8cf0" stroke="none" />
              <path d="M27 49A19 19 0 0 1 22 13M33 11A19 19 0 0 1 38 47" />
              <path d="M20 9l8 2-3 9zM40 51l-8-2 3-9z" fill="#fff" stroke="none" />
            </svg>
          </button>
        </div>
        <span>默认输出方式</span>
      </div>
      <div className="ml-auto flex gap-[17px]">
        {hashTools.map((t) => (
          <button key={t.label} className="flex flex-col items-center gap-0.5 whitespace-nowrap">
            {t.icon}
            {t.label}
          </button>
        ))}
      </div>
    </div>
    <div className="mt-[15px] min-h-0 flex-1 overflow-hidden border-2 border-b-0 border-[#7b9dc4]">
      <table className="w-full table-fixed border-collapse whitespace-nowrap">
        <colgroup>
          <col className="w-[62px]" /><col className="w-[187px]" /><col className="w-[759px]" /><col className="w-[109px]" />
          <col className="w-[114px]" /><col /><col className="w-[151px]" /><col className="w-[44px]" />
        </colgroup>
        <thead>
          <tr className="h-[41px] bg-[linear-gradient(#fff_40%,#f5f6f7_40%,#eff0f2)] text-left">
            {['序号', '文件名', '完整路径'].map((h) => <th key={h} className="border-r-2 border-[#e3e4e6] pl-2 font-normal">{h}</th>)}
            <th className="border-r-2 border-[#e3e4e6] text-center font-normal">文件大小</th>
            <th className="border-r-2 border-[#e3e4e6] text-center font-normal">算法</th>
            <th className="border-r-2 border-[#e3e4e6] pl-[9px] font-normal">哈希值</th>
            <th className="border-r-2 border-[#e3e4e6] text-center font-normal">输出方式</th>
            <th className="overflow-hidden pl-2 font-normal">任务</th>
          </tr>
        </thead>
        <tbody>
          <tr className="h-[52px] border-b-2 border-[#a0a0a0] bg-[#a8d4ff]">
            <td className="border-r-2 border-[#8f9aa5] pl-1.5">1</td>
            <td className="border-r-2 border-[#8f9aa5] pl-2">
              <span className="flex items-center gap-[13px]"><TextPage className="h-[30px] w-6" />吵群技巧.txt</span>
            </td>
            <td className="overflow-hidden border-r-2 border-[#8f9aa5] pl-1">{'C:\\Users\\ADMINI~1\\AppData\\Local\\Temp\\Rar$DRa0.648\\吵群技巧.txt'}</td>
            <td className="border-r-2 border-[#8f9aa5] text-center">1.9 KB</td>
            <td className="border-r-2 border-[#8f9aa5] px-1">
              <Picker label="算法" value="SM3" className="h-[42px] w-[101px] border-2 border-[#1e9cff]" chevron="right-2" />
            </td>
            <td className="border-r-2 border-[#8f9aa5] pl-[9px]">
              <span className="flex items-center">
                4767951E073483956C0AE607C0E8920EBA840C7F45691A0C700ACE9810887AE1
                <span className="ml-auto flex h-9 w-9 items-center justify-center rounded-full bg-[#a9c6e2] text-[#777]">3</span>
                <button aria-label="查看" className="ml-[18px]">
                  <svg viewBox="0 0 24 26" className="h-[26px] w-6" fill="none" stroke="#111" strokeWidth="2"><path d="M1 1h22v24H1zM5 7h14M5 11h14M5 15h14M5 19h14" /></svg>
                </button>
                <button aria-label="复制" className="mr-3 ml-5">
                  <svg viewBox="0 0 28 30" className="h-[30px] w-7" fill="none" stroke="#111" strokeWidth="2"><path d="M9 7V1h18v22h-6M1 7h19v22H1zM5 13h11M5 18h11M5 23h11" /></svg>
                </button>
              </span>
            </td>
            <td className="border-r-2 border-[#8f9aa5] px-1">
              <Picker label="输出方式" value="Hex大写" className="h-[42px] w-[139px] border-2 border-[#1e9cff]" chevron="right-2" />
            </td>
            <td className="overflow-hidden pl-1">0.07</td>
          </tr>
        </tbody>
      </table>
    </div>
  </section>
);

/* ---------- taskbar ---------- */

const tasks = [
  { label: 'C:\\Users\\Adminis...', icon: <Folder className="h-9 w-7" />, width: 'w-[284px]', pad: 'pl-4', gap: 'gap-[18px]' },
  { label: '文档', icon: <DocPage className="h-[38px] w-[30px]" />, width: 'w-[284px]', pad: 'pl-5', gap: 'gap-4' },
  { label: '哈希值批量计算器 ...', icon: <HLogo className="h-[38px] w-[38px]" />, width: 'w-[299px]', pad: 'pl-[22px]', gap: 'gap-[10px]', active: true },
  { label: '话术、方法、技巧....', icon: <Books className="h-8 w-[42px]" strap />, width: 'w-[283px]', pad: 'pl-[9px]', gap: 'gap-2' },
];

const Taskbar = () => (
  <footer className="absolute inset-x-0 bottom-0 flex h-[75px] items-stretch border-t border-black/30 bg-black/85 text-[23px] leading-8 text-white">
    <button aria-label="开始" className="flex w-[90px] items-center justify-center">
      <svg viewBox="0 0 30 30" className="h-[30px] w-[30px]" fill="#fff">
        <path d="M0 4l13-2v12H0zM15 2l15-2v14H15zM0 16h13v12L0 26zM15 16h15v14l-15-2z" />
      </svg>
    </button>
    <div className="ml-[13px] flex gap-3">
      {tasks.map((t) => (
        <button key={t.label} className={`flex items-center border-b-4 border-[#76b9ed] text-left whitespace-nowrap ${t.width} ${t.pad} ${t.gap} ${t.active ? 'bg-white/20' : ''}`}>
          <span className="shrink-0">{t.icon}</span>
          {t.label}
        </button>
      ))}
    </div>
    <div className="ml-auto flex items-center">
      <div className="mr-3 h-5 w-5 bg-white" />
      <div className="flex h-full w-[41px] items-center justify-center bg-white/10">
        <svg viewBox="0 0 20 30" className="h-[30px] w-5" fill="none" stroke="#fff" strokeWidth="2"><path d="M4 10V1h12v9M8 5h1M12 5h1M2 10h16v19H2z" /></svg>
      </div>
      <div className="mr-6 ml-3 flex h-[30px] items-start gap-5">
        <svg viewBox="0 0 28 20" className="h-5 w-7" fill="none" stroke="#fff" strokeWidth="2"><path d="M1 4h26v15H1z" /></svg>
        <svg viewBox="0 0 28 28" className="h-7 w-7" fill="none" stroke="#fff" strokeWidth="2"><path d="M2 10h6l8-8v24l-8-8H2z" /></svg>
        <svg viewBox="0 0 28 28" className="h-7 w-7" fill="none" stroke="#fff" strokeWidth="2"><path d="M1 8q13-10 26 0M14 2v20" /></svg>
        <svg viewBox="0 0 28 28" className="h-7 w-7" fill="none" stroke="#fff" strokeWidth="3"><path d="M1 3h26v18H1z" /></svg>
      </div>
      <div className="w-[120px] text-center leading-9 whitespace-nowrap">
        <div>11:24</div>
        <div>2024/12/18</div>
      </div>
      <svg viewBox="0 0 30 32" className="mr-[38px] ml-[30px] h-8 w-[30px]" fill="none" stroke="#fff" strokeWidth="2"><path d="M1 1h28v23H20l-5 6-4-6H1z" /></svg>
      <div className="mr-2 h-full w-px bg-[#777]" />
    </div>
  </footer>
);

const App = () => (
  <main className="relative h-screen min-h-[1200px] w-full overflow-hidden bg-[radial-gradient(circle_at_0%_85%,#00b4ff_0%,#00a4f8_35%,#0090ec_55%,#0062d2_75%,#0040bb_95%,#0038b2_100%)] font-['Noto_Sans','Noto_Sans_CJK_SC',sans-serif]">
    <Desktop />
    <WinRar />
    <Explorer />
    <HashCalculator />
    <Taskbar />

    {/* highlight frames */}
    <div className="pointer-events-none absolute top-[241px] left-[1572px] h-[366px] w-[641px] rounded-sm border-[6px] border-[#ed1c24]" />
    <div className="pointer-events-none absolute top-[920px] left-[1286px] h-[130px] w-[1035px] rounded-sm border-[6px] border-[#ed1c24]" />

    <div role="tooltip" className="absolute right-[178px] bottom-[3px] flex h-[39px] items-center border border-[#bbb] bg-white px-[10px] text-[22px] leading-8 whitespace-nowrap text-[#575757]">
      安全删除硬件并弹出媒体
    </div>
    <div className="pointer-events-none absolute right-[6px] bottom-[10px] text-[53px] leading-[72px] font-light whitespace-nowrap text-[#c4c4c4] [text-shadow:1px_2px_2px_#0008]">
      CSDN @栖山__0x5317
    </div>
  </main>
);

export default App;
